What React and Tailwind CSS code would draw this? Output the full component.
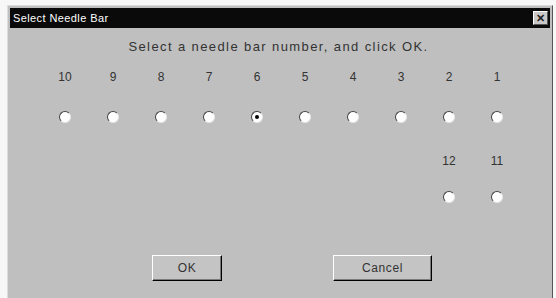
import React from 'react'

const cols = ['10', '9', '8', '7', '6', '5', '4', '3', '2', '1']

const Radio = ({ checked }) => (
  <span className="relative inline-block w-[12px] h-[12px] rounded-full bg-white border border-t-[#444] border-l-[#444] border-r-[#e8e8e8] border-b-[#e8e8e8]">
    {checked && <span className="absolute left-[3px] top-[3px] w-[4px] h-[4px] rounded-full bg-black" />}
  </span>
)

const Button = ({ children, className }) => (
  <button className={`h-[26px] bg-[#c4c4c4] border border-t-white border-l-white border-r-black border-b-black shadow-[inset_-1px_-1px_0_#7a7a7a] text-[12px] tracking-[0.6px] text-[#333] ${className}`}>
    {children}
  </button>
)

export default function App() {
  return (
    <div className="w-[556px] h-[298px] bg-[#f7f7f7] pl-[7px] pt-[5px] overflow-hidden" style={{ fontFamily: '"Liberation Sans", Arial, sans-serif' }}>
      <div className="w-[546px] h-[295px] bg-[#bfbfbf] border border-t-[#dcdcdc] border-l-[#dcdcdc] border-r-[#555] border-b-[#666] p-[2px] flex flex-col">
        <div className="h-[20px] bg-[#0a0a0a] flex items-center justify-between pl-[3px] pr-[2px]">
          <span className="text-white text-[11px] tracking-[0.4px]">Select Needle Bar</span>
          <span className="w-[15px] h-[14px] bg-[#c8c8c8] border border-t-white border-l-white border-r-[#555] border-b-[#555] flex items-center justify-center text-[11px] leading-none text-[#222] font-bold">✕</span>
        </div>
        <div className="flex flex-col flex-1">
          <p className="text-[13px] tracking-[1.4px] text-[#333] text-center mt-[9px] ml-[-3px]">Select a needle bar number, and click OK.</p>
          <div className="grid grid-cols-[repeat(10,48px)] ml-[31px] mt-[13px] text-[12px] text-[#333]">
            {cols.map((n) => (
              <div key={n} className="flex flex-col items-center">
                <span className="h-[14px] leading-[14px]">{n}</span>
                <span className="mt-[27px] flex"><Radio checked={n === '6'} /></span>
              </div>
            ))}
          </div>
          <div className="grid grid-cols-[repeat(10,48px)] ml-[31px] mt-[31px] text-[12px] text-[#333]">
            {['12', '11'].map((n, i) => (
              <div key={n} className={`flex flex-col items-center ${i === 0 ? 'col-start-9' : 'col-start-10'}`}>
                <span className="h-[14px] leading-[14px]">{n}</span>
                <span className="mt-[23px] flex"><Radio /></span>
              </div>
            ))}
          </div>
          <div className="flex mt-[52px]">
            <Button className="ml-[142px] w-[70px]">OK</Button>
            <Button className="ml-[111px] w-[99px]">Cancel</Button>
          </div>
        </div>
      </div>
    </div>
  )
}
